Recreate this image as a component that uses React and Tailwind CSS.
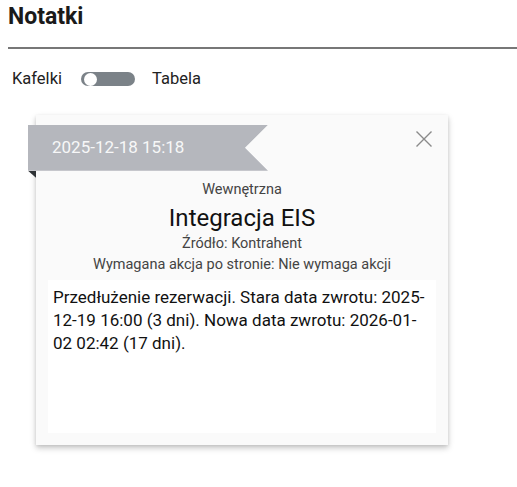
import React, { useState } from "react";

function Toggle({ on, onChange }) {
  return (
    <button
      type="button"
      onClick={() => onChange(!on)}
      className="relative h-[14px] w-[54px] rounded-full bg-[#7b8288]"
    >
      <span
        className={
          "absolute top-[0.5px] h-[13px] w-[13px] rounded-full bg-white " +
          (on ? "left-[38px]" : "left-[3px]")
        }
      />
    </button>
  );
}

function NoteCard({ note }) {
  return (
    <div className="relative w-[412px] bg-[#fafafa] px-3 pb-3 pt-[66px] shadow-[0_3px_6px_rgba(0,0,0,0.22),0_1px_3px_rgba(0,0,0,0.08)]">
      {/* ribbon with date */}
      <div className="absolute left-[-8px] top-[10px]">
        <div
          className="flex h-[46px] w-[240px] items-center bg-[#b5b7bd] pl-[24px] text-[17px] text-[#f7f7f8]"
          style={{ clipPath: "polygon(0 0, 100% 0, 90.4% 50%, 100% 100%, 0 100%)" }}
        >
          {note.date}
        </div>
        <div
          className="h-[7px] w-[8px] bg-[#2f3336]"
          style={{ clipPath: "polygon(0 0, 100% 0, 100% 100%)" }}
        />
      </div>
      <button type="button" className="absolute right-[15px] top-[15px] text-[#8a8a8a]">
        <svg width="18" height="18" viewBox="0 0 18 18" fill="none" stroke="currentColor" strokeWidth="1.4">
          <path d="M1.5 1.5 L16.5 16.5 M16.5 1.5 L1.5 16.5" />
        </svg>
      </button>

      <div className="flex flex-col items-center text-center">
        <div className="text-[14.5px] leading-[18px] text-[#444]">{note.type}</div>
        <div className="mt-[4px] text-[24px] leading-[30px] text-[#111]">{note.title}</div>
        <div className="mt-[2px] text-[14.5px] leading-[18px] text-[#444]">Źródło: {note.source}</div>
        <div className="mt-[3px] text-[14.5px] leading-[18px] text-[#444]">
          Wymagana akcja po stronie: {note.action}
        </div>
      </div>

      <div className="mt-[6px] h-[153px] bg-white px-[5px] pt-[6px] text-[17px] leading-[23px] text-[#111]">
        {note.text}
      </div>
    </div>
  );
}

export default function App() {
  const [table, setTable] = useState(false);

  const note = {
    date: "2025-12-18 15:18",
    type: "Wewnętrzna",
    title: "Integracja EIS",
    source: "Kontrahent",
    action: "Nie wymaga akcji",
    text: "Przedłużenie rezerwacji. Stara data zwrotu: 2025-12-19 16:00 (3 dni). Nowa data zwrotu: 2026-01-02 02:42 (17 dni).",
  };

  return (
    <div className="min-h-screen bg-white font-['Roboto',sans-serif]">
      <div className="ml-2 border-b-2 border-[#777] pb-[16px] pt-[2px]">
        <h2 className="text-[23px] font-bold leading-[29px] text-[#1a1a1a]">Notatki</h2>
      </div>

      <div className="mt-[18px] flex items-center pl-3 text-[16.5px] text-[#222]">
        <span>Kafelki</span>
        <span className="ml-[19px] mr-[17px] flex items-center">
          <Toggle on={table} onChange={setTable} />
        </span>
        <span>Tabela</span>
      </div>

      <div className="mt-[23px] pl-[36px]">
        <NoteCard note={note} />
      </div>
    </div>
  );
}
